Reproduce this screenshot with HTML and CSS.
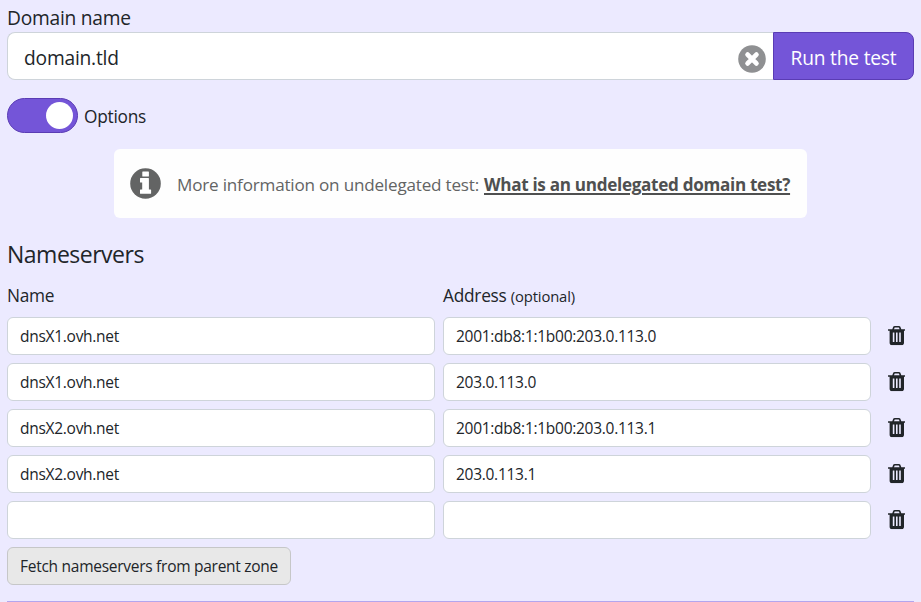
FILE: index.html
```html
<!DOCTYPE html>
<html lang="en">
<head>
<meta charset="utf-8">
<title>Domain test</title>
<link rel="stylesheet" href="styles.css">
</head>
<body>
<svg width="0" height="0" class="defs" aria-hidden="true">
  <symbol id="trash" viewBox="192 128 1408 1536"><path d="M704 1376v-704q0-14-9-23t-23-9h-64q-14 0-23 9t-9 23v704q0 14 9 23t23 9h64q14 0 23-9t9-23zm256 0v-704q0-14-9-23t-23-9h-64q-14 0-23 9t-9 23v704q0 14 9 23t23 9h64q14 0 23-9t9-23zm256 0v-704q0-14-9-23t-23-9h-64q-14 0-23 9t-9 23v704q0 14 9 23t23 9h64q14 0 23-9t9-23zm-544-992h448l-48-117q-7-9-17-11h-317q-10 2-17 11zm928 32v64q0 14-9 23t-23 9h-96v948q0 83-47 143.5t-113 60.5h-832q-66 0-113-58.5t-47-141.5v-952h-96q-14 0-23-9t-9-23v-64q0-14 9-23t23-9h309l70-167q15-37 54-63t79-26h320q40 0 79 26t54 63l70 167h309q14 0 23 9t9 23z"/></symbol>
</svg>
<form class="page">
  <label class="domain-label" for="domain"><span>Domain name</span></label>
  <div class="domain-group">
    <div class="domain-field">
      <input id="domain" class="domain-input" type="text" value="domain.tld">
      <button class="clear" type="button" aria-label="Clear">
        <svg width="28" height="28" viewBox="0 0 28 28"><circle cx="14" cy="14" r="13.8" fill="#8f9092"/><path d="M9.6 9.600l8.800 8.800M18.400 9.600l-8.800 8.800" stroke="#fff" stroke-width="4.800" stroke-linecap="round"/></svg>
      </button>
    </div>
    <button class="run" type="button"><span>Run the test</span></button>
  </div>
  <div class="options">
    <span class="switch"><span class="knob"></span></span>
    <span class="options-text">Options</span>
  </div>
  <div class="info">
    <svg class="info-icon" width="31" height="31" viewBox="0 0 31 31"><circle cx="15.5" cy="15.5" r="15.3" fill="#636464"/><path fill="#fff" d="M12.8 3.4h5.6q.5 0 .5.5v4q0 .5-.5.5h-5.6q-.5 0-.5-.5v-4q0-.5.5-.5zM10.5 10h7.9q.5 0 .5.5V21.400h1.700q.5 0 .5.5v3.400q0 .5-.5.5H10.500q-.5 0-.5-.5v-3.400q0-.5.5-.5h1.700V14.500h-1.700q-.5 0-.5-.5v-3.500q0-.5.5-.5z"/></svg>
    <p class="info-text"><span class="info-lead">More information on undelegated test:</span><a class="info-link" href="#">What is an undelegated domain test?</a></p>
  </div>
  <h2 class="heading"><span>Nameservers</span></h2>
  <div class="grid heads">
    <span class="col-name">Name</span>
    <span class="col-address">Address <small>(optional)</small></span>
  </div>
  <div class="rows">
    <div class="grid"><input type="text" value="dnsX1.ovh.net"><input class="addr" type="text" value="2001:db8:1:1b00:203.0.113.0"><svg class="trash"><use href="#trash"/></svg></div>
    <div class="grid"><input type="text" value="dnsX1.ovh.net"><input class="addr" type="text" value="203.0.113.0"><svg class="trash"><use href="#trash"/></svg></div>
    <div class="grid"><input type="text" value="dnsX2.ovh.net"><input class="addr" type="text" value="2001:db8:1:1b00:203.0.113.1"><svg class="trash"><use href="#trash"/></svg></div>
    <div class="grid"><input type="text" value="dnsX2.ovh.net"><input class="addr" type="text" value="203.0.113.1"><svg class="trash"><use href="#trash"/></svg></div>
    <div class="grid"><input type="text" value=""><input class="addr" type="text" value=""><svg class="trash"><use href="#trash"/></svg></div>
  </div>
  <button class="fetch" type="button"><span>Fetch nameservers from parent zone</span></button>
  <hr>
</form>
</body>
</html>
```
FILE: styles.css
```css
* { box-sizing: border-box; }
body {
  margin: 0;
  height: 602px;
  overflow: hidden;
  background: #eceaff;
  color: #212529;
  font-family: "Open Sans", "Noto Sans", sans-serif;
}
input, button { font-family: inherit; color: inherit; margin: 0; }
.defs { position: absolute; }
.page { padding: 4px 7px 0; }
.domain-label { display: block; height: 28px; line-height: 27px; font-size: 19.2px; letter-spacing: -0.25px; }
.domain-group { display: flex; height: 48px; }
.domain-field {
  flex: 1;
  display: flex;
  align-items: center;
  padding: 0 7.5px 0 16px;
  background: #fff;
  border: 1px solid #ced4da;
  border-right: 0;
  border-radius: 8px 0 0 8px;
}
.domain-input { flex: 1; min-width: 0; height: 44px; padding: 2px 0 0; border: 0; background: none; font-size: 19.2px; letter-spacing: -0.2px; }
.clear { display: flex; padding: 0; margin-top: 5px; border: 0; background: none; }
.run {
  width: 141px;
  padding: 2px 0 0;
  border: 1px solid #5a3cb4;
  border-radius: 0 8px 8px 0;
  background: #7455d8;
  color: #fff;
  font-size: 19.2px;
  letter-spacing: -0.2px;
}
.options { display: flex; align-items: center; margin-top: 18px; height: 35px; }
.switch {
  display: flex;
  align-items: center;
  justify-content: flex-end;
  width: 71px;
  height: 35px;
  padding-right: 4.5px;
  border: 1px solid #5a3cb4;
  border-radius: 18px;
  background: #7455d8;
}
.knob { width: 27px; height: 27px; border-radius: 50%; background: #fff; }
.options-text { margin-left: 6px; padding-top: 1px; font-size: 17.3px; letter-spacing: -0.25px; }
.info {
  display: flex;
  align-items: center;
  width: 693px;
  height: 69px;
  margin: 16px auto 0 107px;
  padding: 0 0 0 16px;
  border-radius: 6px;
  background: #fefefe;
  color: #636464;
}
.info-icon { flex: none; }
.info-text { display: flex; margin: 2px 0 0 16px; font-size: 17.1px; letter-spacing: -0.2px; white-space: nowrap; }
.info-lead { width: 307px; }
.info-link { color: #4f5050; font-weight: 700; letter-spacing: -0.3px; text-decoration: underline; text-decoration-thickness: 2px; text-underline-offset: 2px; }
.heading { margin: 19px 0 0; height: 34px; line-height: 34px; font-size: 23px; font-weight: 400; letter-spacing: -0.5px; }
.grid { display: grid; grid-template-columns: 428px 428px 18px; column-gap: 8px; align-items: center; }
.heads { height: 26px; margin-top: 12px; font-size: 17.3px; line-height: 26px; letter-spacing: -0.25px; }
.heads small { font-size: 14.8px; letter-spacing: -0.15px; }
.rows { display: grid; gap: 8px; margin-top: 8px; }
.rows input {
  height: 38px;
  width: 100%;
  padding: 0 12px 1px;
  border: 1px solid #ced4da;
  border-radius: 6px;
  background: #fff;
  font-size: 15.5px;
  letter-spacing: -0.28px;
}
.trash { width: 17.6px; height: 19.2px; margin-left: 8.5px; fill: #212529; }
.fetch {
  display: block;
  width: 284px;
  height: 38px;
  margin-top: 8px;
  padding: 0 0 1px 12px;
  border: 1px solid #c6c7c8;
  border-radius: 6px;
  background: #e8e8e8;
  font-size: 15.5px;
  letter-spacing: -0.27px;
  text-align: left;
}
hr { height: 1px; margin: 16px 0 0; border: 0; background: #b3a6ee; }
```
